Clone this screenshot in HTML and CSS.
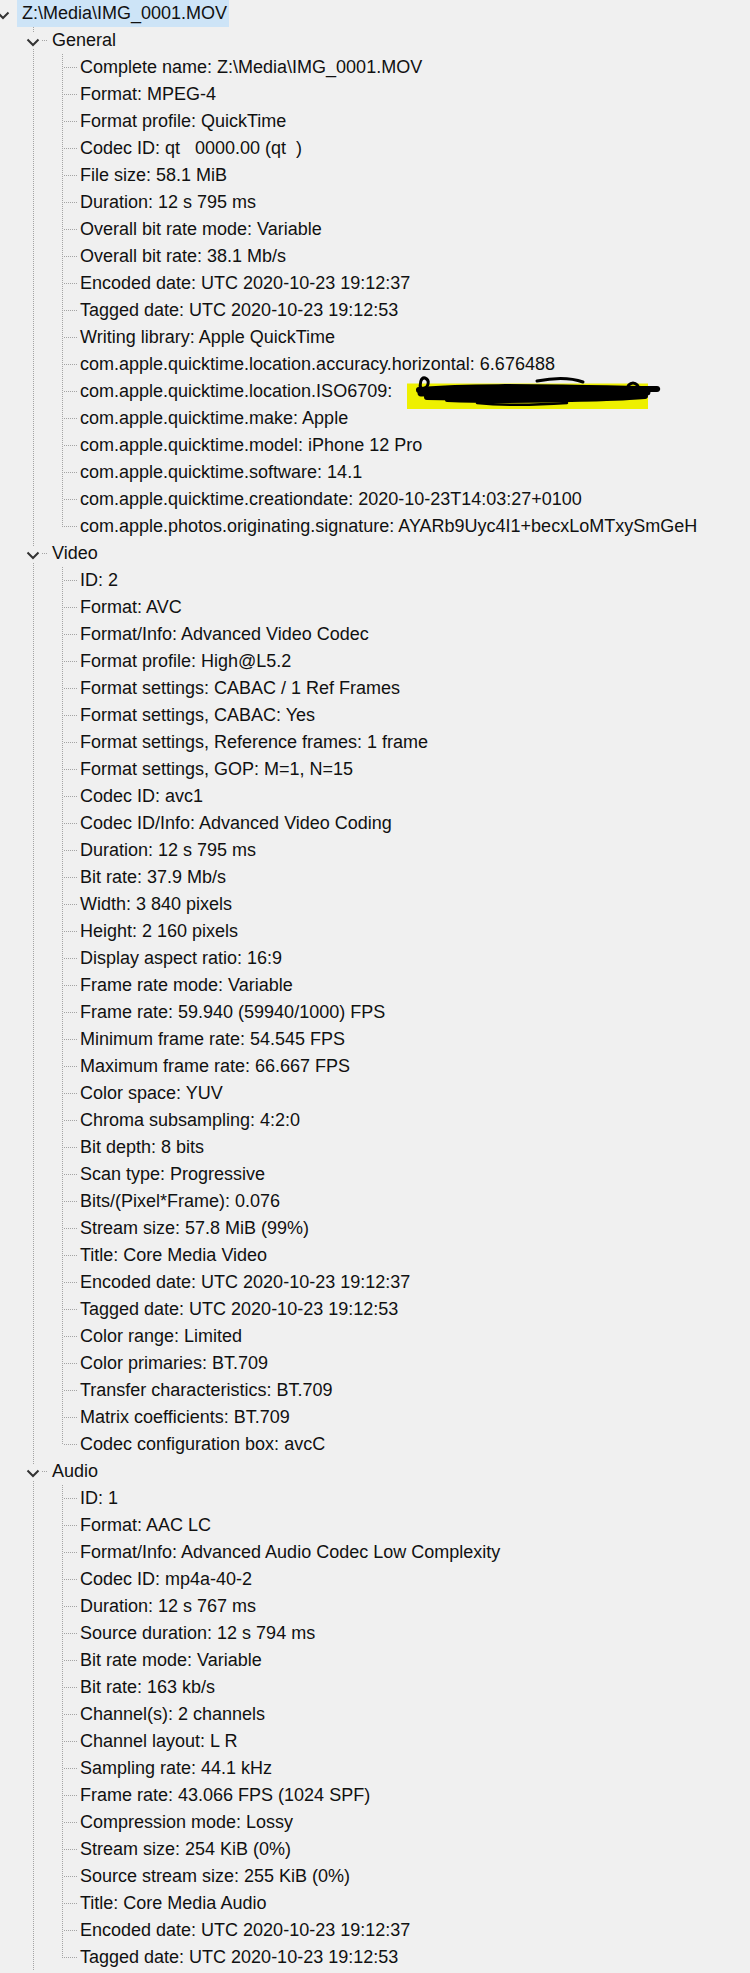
FILE: index.html
```html
<!DOCTYPE html>
<html lang="en">
<head>
    <meta charset="UTF-8">
    <title>MediaInfo - Tree</title>
    <link rel="stylesheet" href="styles.css">
</head>
<body>
    <ul class="tree">
        <li class="root">
            <div class="row">
                <span class="twisty"><svg viewBox="0 0 16 16"><path d="M2.5 6.5 L8 12 L13.5 6.5"/></svg></span>
                <span class="label selected">Z:\Media\IMG_0001.MOV</span>
            </div>
            <ul class="sections">
                <li class="section">
                    <div class="row">
                        <span class="twisty"><svg viewBox="0 0 16 16"><path d="M2.5 6.5 L8 12 L13.5 6.5"/></svg></span>
                        <span class="label">General</span>
                    </div>
                    <ul class="items">
                        <li class="row">Complete name: Z:\Media\IMG_0001.MOV</li>
                        <li class="row">Format: MPEG-4</li>
                        <li class="row">Format profile: QuickTime</li>
                        <li class="row">Codec ID: qt&nbsp;&nbsp; 0000.00 (qt&nbsp; )</li>
                        <li class="row">File size: 58.1 MiB</li>
                        <li class="row">Duration: 12 s 795 ms</li>
                        <li class="row">Overall bit rate mode: Variable</li>
                        <li class="row">Overall bit rate: 38.1 Mb/s</li>
                        <li class="row">Encoded date: UTC 2020-10-23 19:12:37</li>
                        <li class="row">Tagged date: UTC 2020-10-23 19:12:53</li>
                        <li class="row">Writing library: Apple QuickTime</li>
                        <li class="row">com.apple.quicktime.location.accuracy.horizontal: 6.676488</li>
                        <li class="row">com.apple.quicktime.location.ISO6709:&nbsp;<span class="redact">+<svg class="scribble" viewBox="0 0 262 34">
                            <rect x="0" y="5.5" width="241" height="25.5" fill="#eef000"/>
                            <path d="M12 12 C 60 8, 120 9, 180 10 S 230 11, 250 11" stroke-width="6"/>
                            <path d="M14 15 C 60 14, 120 14, 180 15 S 225 14, 240 14" stroke-width="7"/>
                            <path d="M20 19 C 70 20, 120 19, 170 20 S 215 19, 238 18" stroke-width="6"/>
                            <path d="M40 22 C 90 24, 140 23, 200 21" stroke-width="4"/>
                            <path d="M70 25 C 100 28, 130 27, 160 25" stroke-width="2.5"/>
                            <path d="M14 12 C 12 6, 14 -1, 18 0 C 23 2, 22 9, 16 11" stroke-width="3"/>
                            <path d="M130 3 C 150 -1, 165 0, 176 4" stroke-width="3"/>
                            <ellipse cx="226" cy="12" rx="6" ry="7" stroke-width="3"/>
                            <path d="M232 11 L 252 11" stroke-width="2.5"/>
                        </svg></span></li>
                        <li class="row">com.apple.quicktime.make: Apple</li>
                        <li class="row">com.apple.quicktime.model: iPhone 12 Pro</li>
                        <li class="row">com.apple.quicktime.software: 14.1</li>
                        <li class="row">com.apple.quicktime.creationdate: 2020-10-23T14:03:27+0100</li>
                        <li class="row">com.apple.photos.originating.signature: AYARb9Uyc4I1+becxLoMTxySmGeH</li>
                    </ul>
                </li>
                <li class="section">
                    <div class="row">
                        <span class="twisty"><svg viewBox="0 0 16 16"><path d="M2.5 6.5 L8 12 L13.5 6.5"/></svg></span>
                        <span class="label">Video</span>
                    </div>
                    <ul class="items">
                        <li class="row">ID: 2</li>
                        <li class="row">Format: AVC</li>
                        <li class="row">Format/Info: Advanced Video Codec</li>
                        <li class="row">Format profile: High@L5.2</li>
                        <li class="row">Format settings: CABAC / 1 Ref Frames</li>
                        <li class="row">Format settings, CABAC: Yes</li>
                        <li class="row">Format settings, Reference frames: 1 frame</li>
                        <li class="row">Format settings, GOP: M=1, N=15</li>
                        <li class="row">Codec ID: avc1</li>
                        <li class="row">Codec ID/Info: Advanced Video Coding</li>
                        <li class="row">Duration: 12 s 795 ms</li>
                        <li class="row">Bit rate: 37.9 Mb/s</li>
                        <li class="row">Width: 3 840 pixels</li>
                        <li class="row">Height: 2 160 pixels</li>
                        <li class="row">Display aspect ratio: 16:9</li>
                        <li class="row">Frame rate mode: Variable</li>
                        <li class="row">Frame rate: 59.940 (59940/1000) FPS</li>
                        <li class="row">Minimum frame rate: 54.545 FPS</li>
                        <li class="row">Maximum frame rate: 66.667 FPS</li>
                        <li class="row">Color space: YUV</li>
                        <li class="row">Chroma subsampling: 4:2:0</li>
                        <li class="row">Bit depth: 8 bits</li>
                        <li class="row">Scan type: Progressive</li>
                        <li class="row">Bits/(Pixel*Frame): 0.076</li>
                        <li class="row">Stream size: 57.8 MiB (99%)</li>
                        <li class="row">Title: Core Media Video</li>
                        <li class="row">Encoded date: UTC 2020-10-23 19:12:37</li>
                        <li class="row">Tagged date: UTC 2020-10-23 19:12:53</li>
                        <li class="row">Color range: Limited</li>
                        <li class="row">Color primaries: BT.709</li>
                        <li class="row">Transfer characteristics: BT.709</li>
                        <li class="row">Matrix coefficients: BT.709</li>
                        <li class="row">Codec configuration box: avcC</li>
                    </ul>
                </li>
                <li class="section">
                    <div class="row">
                        <span class="twisty"><svg viewBox="0 0 16 16"><path d="M2.5 6.5 L8 12 L13.5 6.5"/></svg></span>
                        <span class="label">Audio</span>
                    </div>
                    <ul class="items">
                        <li class="row">ID: 1</li>
                        <li class="row">Format: AAC LC</li>
                        <li class="row">Format/Info: Advanced Audio Codec Low Complexity</li>
                        <li class="row">Codec ID: mp4a-40-2</li>
                        <li class="row">Duration: 12 s 767 ms</li>
                        <li class="row">Source duration: 12 s 794 ms</li>
                        <li class="row">Bit rate mode: Variable</li>
                        <li class="row">Bit rate: 163 kb/s</li>
                        <li class="row">Channel(s): 2 channels</li>
                        <li class="row">Channel layout: L R</li>
                        <li class="row">Sampling rate: 44.1 kHz</li>
                        <li class="row">Frame rate: 43.066 FPS (1024 SPF)</li>
                        <li class="row">Compression mode: Lossy</li>
                        <li class="row">Stream size: 254 KiB (0%)</li>
                        <li class="row">Source stream size: 255 KiB (0%)</li>
                        <li class="row">Title: Core Media Audio</li>
                        <li class="row">Encoded date: UTC 2020-10-23 19:12:37</li>
                        <li class="row">Tagged date: UTC 2020-10-23 19:12:53</li>
                    </ul>
                </li>
            </ul>
        </li>
    </ul>
</body>
</html>
```

FILE: styles.css
```css
body {
    margin: 0;
    background-color: #f0f0f0;
    font-family: "Liberation Sans", Arial, sans-serif;
    font-size: 18px;
    color: #111;
    overflow: hidden;
}
.tree, .tree ul {
    list-style: none;
    margin: 0;
    padding: 0;
}
.row {
    display: flex;
    align-items: center;
    height: 27px;
    line-height: 27px;
    white-space: nowrap;
}
.twisty {
    flex: none;
    width: 16px;
    height: 16px;
    background-color: #f0f0f0;
}
.twisty svg {
    display: block;
    width: 16px;
    height: 16px;
    fill: none;
    stroke: #333;
    stroke-width: 2;
}
.root > .row .twisty {
    margin-left: -5px;
}
.root > .row .label {
    margin-left: 6px;
}
.selected {
    background-color: #cde4f7;
    padding: 0 2px 0 5px;
}

/* lignes pointillées de l'arbre */
.sections {
    background: repeating-linear-gradient(to bottom, #a4a4a4 0 1px, transparent 1px 2px) no-repeat 33px 0 / 1px 100%;
}
.section > .row {
    padding-left: 25px;
    background: repeating-linear-gradient(to right, #a4a4a4 0 1px, transparent 1px 2px) no-repeat 34px 13px / 14px 1px;
}
.section > .row .label {
    margin-left: 11px;
}
.items {
    background: repeating-linear-gradient(to bottom, #a4a4a4 0 1px, transparent 1px 2px) no-repeat 62px 0 / 1px calc(100% - 13px);
}
.items .row {
    display: block;
    padding-left: 80px;
    background: repeating-linear-gradient(to right, #a4a4a4 0 1px, transparent 1px 2px) no-repeat 64px 13px / 13px 1px;
}

.redact {
    position: relative;
    display: inline-block;
    width: 241px;
    margin-left: 10px;
}
.scribble {
    position: absolute;
    left: 0;
    top: 0;
    width: 262px;
    height: 34px;
    overflow: visible;
    stroke: #000;
    stroke-linecap: round;
    fill: none;
}
.scribble rect {
    stroke: none;
}
```
